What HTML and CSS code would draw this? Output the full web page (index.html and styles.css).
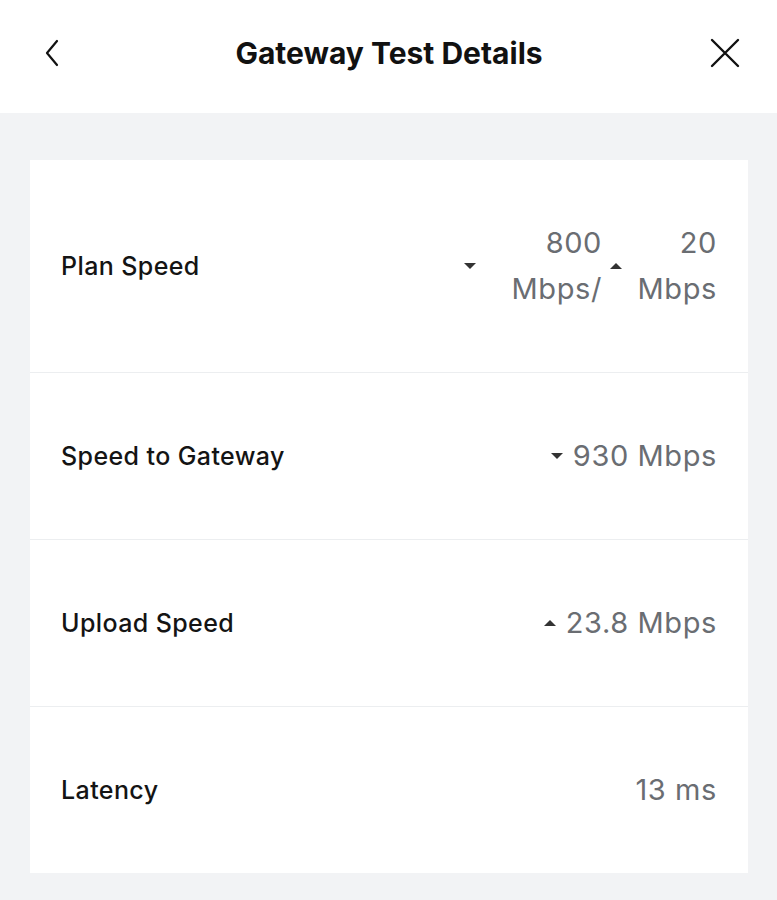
FILE: index.html
```html
<!DOCTYPE html>
<html>
<head>
<meta charset="utf-8">
<link rel="stylesheet" href="styles.css">
</head>
<body>
<header class="topbar">
  <button class="icon-btn back" aria-label="Back">
    <svg width="16" height="28" viewBox="0 0 16 28"><path d="M13 2 L3 14 L13 26" fill="none" stroke="#111" stroke-width="2.2" stroke-linecap="round" stroke-linejoin="round"/></svg>
  </button>
  <h1 class="title">Gateway Test Details</h1>
  <button class="icon-btn close" aria-label="Close">
    <svg width="30" height="30" viewBox="0 0 30 30"><path d="M2 2 L28 28 M28 2 L2 28" fill="none" stroke="#111" stroke-width="2.4" stroke-linecap="round"/></svg>
  </button>
</header>
<main class="content">
  <section class="card">
    <div class="row">
      <span class="label">Plan Speed</span>
      <span class="value plan">
        <span class="seg"><span class="arrow down"></span><span class="segtext w800">800 Mbps/</span></span>
        <span class="seg"><span class="arrow up"></span><span class="segtext w20">20 Mbps</span></span>
      </span>
    </div>
    <div class="row">
      <span class="label">Speed to Gateway</span>
      <span class="value"><span class="arrow down"></span>930 Mbps</span>
    </div>
    <div class="row">
      <span class="label">Upload Speed</span>
      <span class="value"><span class="arrow up"></span>23.8 Mbps</span>
    </div>
    <div class="row">
      <span class="label">Latency</span>
      <span class="value">13 ms</span>
    </div>
  </section>
</main>
</body>
</html>
```
FILE: styles.css
```css
* { box-sizing: border-box; }
html, body { margin: 0; padding: 0; }
body {
  background: #f2f3f5;
  font-family: Inter, "Noto Sans", "Liberation Sans", sans-serif;
  width: 777px;
  height: 900px;
  overflow: hidden;
}
.topbar {
  background: #ffffff;
  height: 113px;
  display: flex;
  align-items: center;
  justify-content: space-between;
  padding: 0 37px 0 44px;
}
.icon-btn {
  border: 0;
  background: none;
  padding: 0;
  display: flex;
  align-items: center;
  justify-content: center;
  margin-top: -8px;
}
.title {
  margin: 0;
  font-size: 30px;
  font-weight: 700;
  color: #111;
  letter-spacing: 0;
  margin-top: -8px;
  margin-left: 8px;
}
.content {
  padding: 47px 29px 26px 30px;
}
.card {
  background: #fff;
  display: flex;
  flex-direction: column;
}
.row {
  display: flex;
  align-items: center;
  justify-content: space-between;
  padding: 60px 31px 60px 31px;
  border-bottom: 1px solid #eceef0;
}
.row:last-child { border-bottom: 0; }
.label {
  font-size: 25px;
  font-weight: 500;
  letter-spacing: 0.4px;
  color: #141414;
  line-height: 46px;
}
.value {
  display: flex;
  align-items: center;
  font-size: 29px;
  letter-spacing: 0.6px;
  color: #6a6d72;
  line-height: 46px;
}
.arrow {
  width: 0;
  height: 0;
  border-left: 6px solid transparent;
  border-right: 6px solid transparent;
  margin-right: 10px;
}
.arrow.down { border-top: 6px solid #333; }
.arrow.up { border-bottom: 6px solid #333; }
.seg {
  display: flex;
  align-items: center;
}
.seg + .seg { margin-left: 8px; }
.segtext { text-align: right; }
.w800 { width: 100px; }
.w20 { width: 84px; }
.seg .arrow.down { margin-right: 26px; }
.seg .arrow.up { margin-right: 11px; margin-left: 0; }
```
